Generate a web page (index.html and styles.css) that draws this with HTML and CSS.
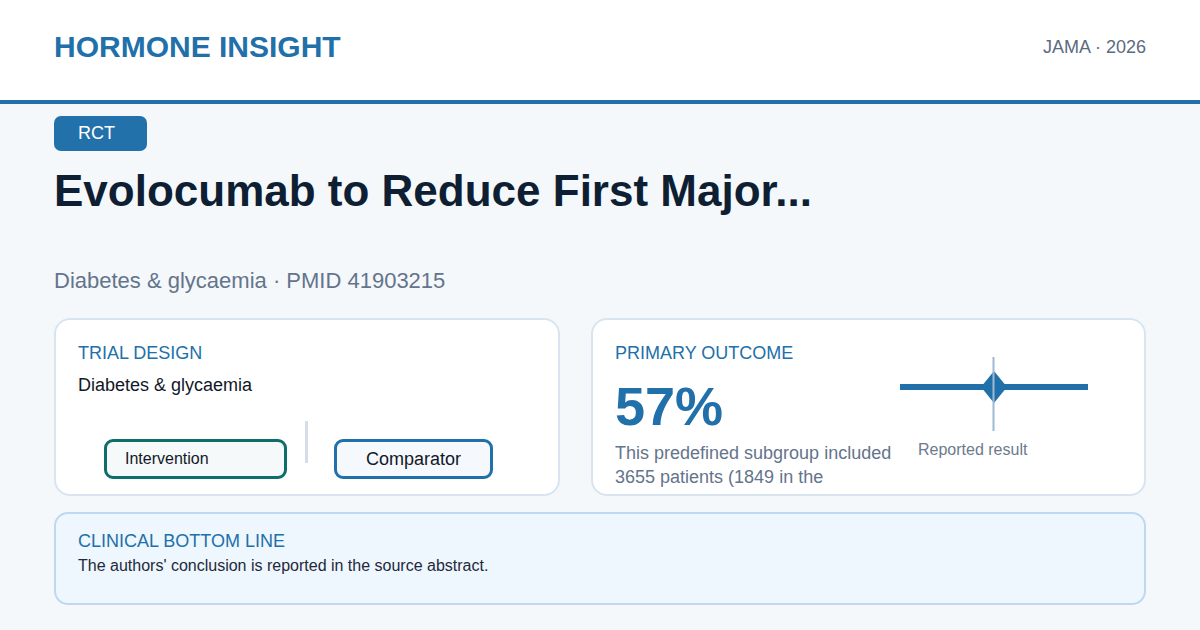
FILE: index.html
```html
<!DOCTYPE html>
<html lang="en">
<head>
<meta charset="utf-8">
<title>Hormone Insight</title>
<link rel="stylesheet" href="styles.css">
</head>
<body>
<header class="header">
  <div class="logo">HORMONE INSIGHT</div>
  <div class="source">JAMA · 2026</div>
</header>
<main class="main">
  <div class="badge">RCT</div>
  <h1 class="title">Evolocumab to Reduce First Major...</h1>
  <div class="subtitle">Diabetes &amp; glycaemia · PMID 41903215</div>
  <div class="cards">
    <section class="card design">
      <div class="label">TRIAL DESIGN</div>
      <div class="topic">Diabetes &amp; glycaemia</div>
      <div class="arms">
        <div class="arm intervention">Intervention</div>
        <div class="arm-divider"></div>
        <div class="arm comparator">Comparator</div>
      </div>
    </section>
    <section class="card outcome">
      <div class="outcome-text">
        <div class="label">PRIMARY OUTCOME</div>
        <div class="big-number">57%</div>
        <div class="desc">This predefined subgroup included 3655 patients (1849 in the</div>
      </div>
      <div class="chart">
        <svg class="forest" width="188" height="74" viewBox="0 0 188 74">
          <rect x="0" y="27" width="188" height="6" fill="#2170a9"/>
          <polygon points="81,30 94,14 107,30 94,46" fill="#2170a9"/>
          <line x1="93.5" y1="0" x2="93.5" y2="74" stroke="#9db9d4" stroke-width="2"/>
        </svg>
        <div class="caption">Reported result</div>
      </div>
    </section>
  </div>
  <section class="bottom-line">
    <div class="label">CLINICAL BOTTOM LINE</div>
    <div class="bl-text">The authors' conclusion is reported in the source abstract.</div>
  </section>
</main>
</body>
</html>
```

FILE: styles.css
```css
html, body {
  margin: 0;
  padding: 0;
}
body {
  width: 1200px;
  height: 630px;
  overflow: hidden;
  background: #f4f8fb;
  font-family: "Liberation Sans", Arial, Helvetica, sans-serif;
}
.header {
  height: 94px;
  padding: 0 54px 6px 54px;
  background: #ffffff;
  border-bottom: 4px solid #2170a9;
  display: flex;
  align-items: center;
  justify-content: space-between;
}
.logo {
  font-size: 30px;
  font-weight: 700;
  color: #2170a9;
}
.source {
  font-size: 18px;
  color: #5b6b80;
}
.main {
  padding: 12px 54px 0 54px;
}
.badge {
  width: 93px;
  height: 35px;
  box-sizing: border-box;
  padding-left: 24px;
  border-radius: 7px;
  background: #2271ab;
  color: #ffffff;
  font-size: 18px;
  line-height: 35px;
}
.title {
  margin: 15px 0 0 0;
  height: 101px;
  overflow: hidden;
  font-size: 44px;
  line-height: 1.15;
  font-weight: 700;
  color: #0f1f33;
}
.subtitle {
  margin-top: 1px;
  font-size: 22px;
  color: #64748b;
}
.cards {
  margin-top: 24px;
  display: grid;
  grid-template-columns: 506px 1fr;
  gap: 31px;
}
.card {
  height: 178px;
  box-sizing: border-box;
  padding: 23px 22px 21px 22px;
  background: #ffffff;
  border: 2px solid #d8e5f0;
  border-radius: 16px;
  overflow: hidden;
}
.label {
  font-size: 18px;
  color: #2170a9;
}
.topic {
  margin-top: 11px;
  font-size: 18px;
  color: #111827;
}
.arms {
  margin-top: 25px;
  padding-left: 26px;
  display: flex;
  align-items: flex-start;
}
.arm {
  margin-top: 18px;
  height: 40px;
  box-sizing: border-box;
  border-radius: 9px;
  display: flex;
  align-items: center;
  color: #111827;
}
.intervention {
  width: 183px;
  padding-left: 18px;
  border: 3px solid #0f6e6b;
  background: #f5f9fa;
  font-size: 16px;
}
.arm-divider {
  margin-left: 18px;
  width: 3px;
  height: 42px;
  background: #d5dee7;
}
.comparator {
  margin-left: 26px;
  width: 159px;
  justify-content: center;
  border: 3px solid #2170a9;
  background: #f5f9fe;
  font-size: 18px;
}
.outcome {
  display: flex;
}
.outcome-text {
  flex: none;
  width: 285px;
}
.big-number {
  margin-top: 15px;
  font-size: 54px;
  line-height: 1;
  font-weight: 700;
  color: #2170a9;
}
.desc {
  margin-top: 8px;
  font-size: 18px;
  line-height: 24.3px;
  color: #64748b;
}
.chart {
  align-self: center;
  display: flex;
  flex-direction: column;
}
.forest {
  display: block;
}
.caption {
  margin-top: 10px;
  margin-left: 18px;
  font-size: 16px;
  color: #6b7a8c;
}
.bottom-line {
  margin-top: 16px;
  height: 93px;
  box-sizing: border-box;
  padding: 17px 22px 15px 22px;
  background: #eef6fe;
  border: 2px solid #bfd8ef;
  border-radius: 14px;
}
.bl-text {
  margin-top: 5px;
  font-size: 16px;
  color: #1e293b;
}
```
